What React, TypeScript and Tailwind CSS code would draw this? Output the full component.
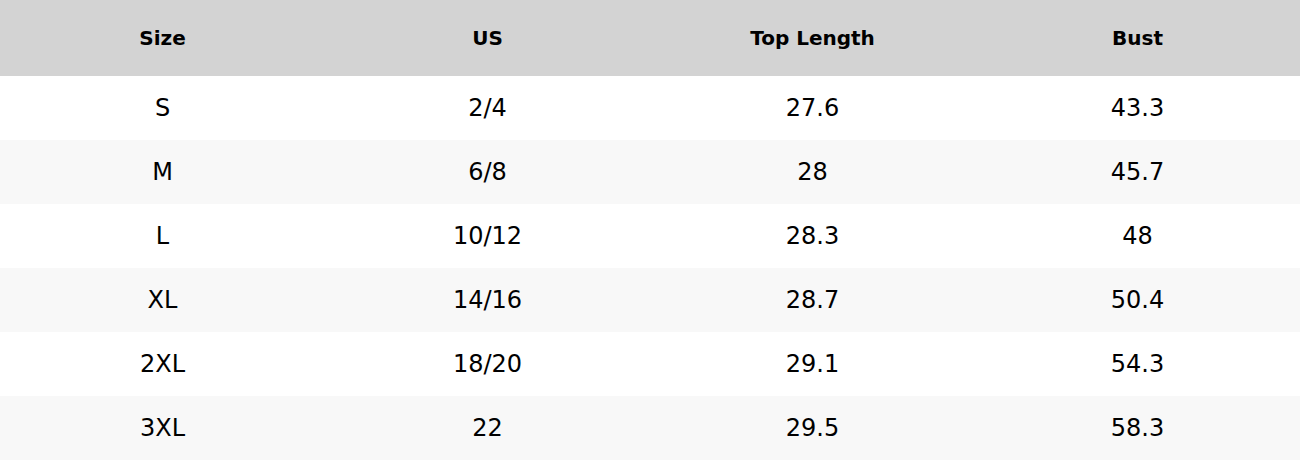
import React from 'react';

const rows = [
  ['S', '2/4', '27.6', '43.3'],
  ['M', '6/8', '28', '45.7'],
  ['L', '10/12', '28.3', '48'],
  ['XL', '14/16', '28.7', '50.4'],
  ['2XL', '18/20', '29.1', '54.3'],
  ['3XL', '22', '29.5', '58.3'],
];

const headers = ['Size', 'US', 'Top Length', 'Bust'];

export default function App() {
  return (
    <div className="w-[1300px] h-[460px] bg-white text-black font-['DejaVu_Sans',sans-serif]">
      <div className="grid grid-cols-4 h-[76px] bg-[#d3d3d3]">
        {headers.map((h) => (
          <div key={h} className="flex items-center justify-center text-[20px] font-bold">
            {h}
          </div>
        ))}
      </div>
      {rows.map((row, i) => (
        <div
          key={row[0]}
          className={`grid grid-cols-4 h-[64px] ${i % 2 === 1 ? 'bg-[#f8f8f8]' : 'bg-white'}`}
        >
          {row.map((cell, j) => (
            <div key={j} className="flex items-center justify-center text-[24px]">
              {cell}
            </div>
          ))}
        </div>
      ))}
    </div>
  );
}
